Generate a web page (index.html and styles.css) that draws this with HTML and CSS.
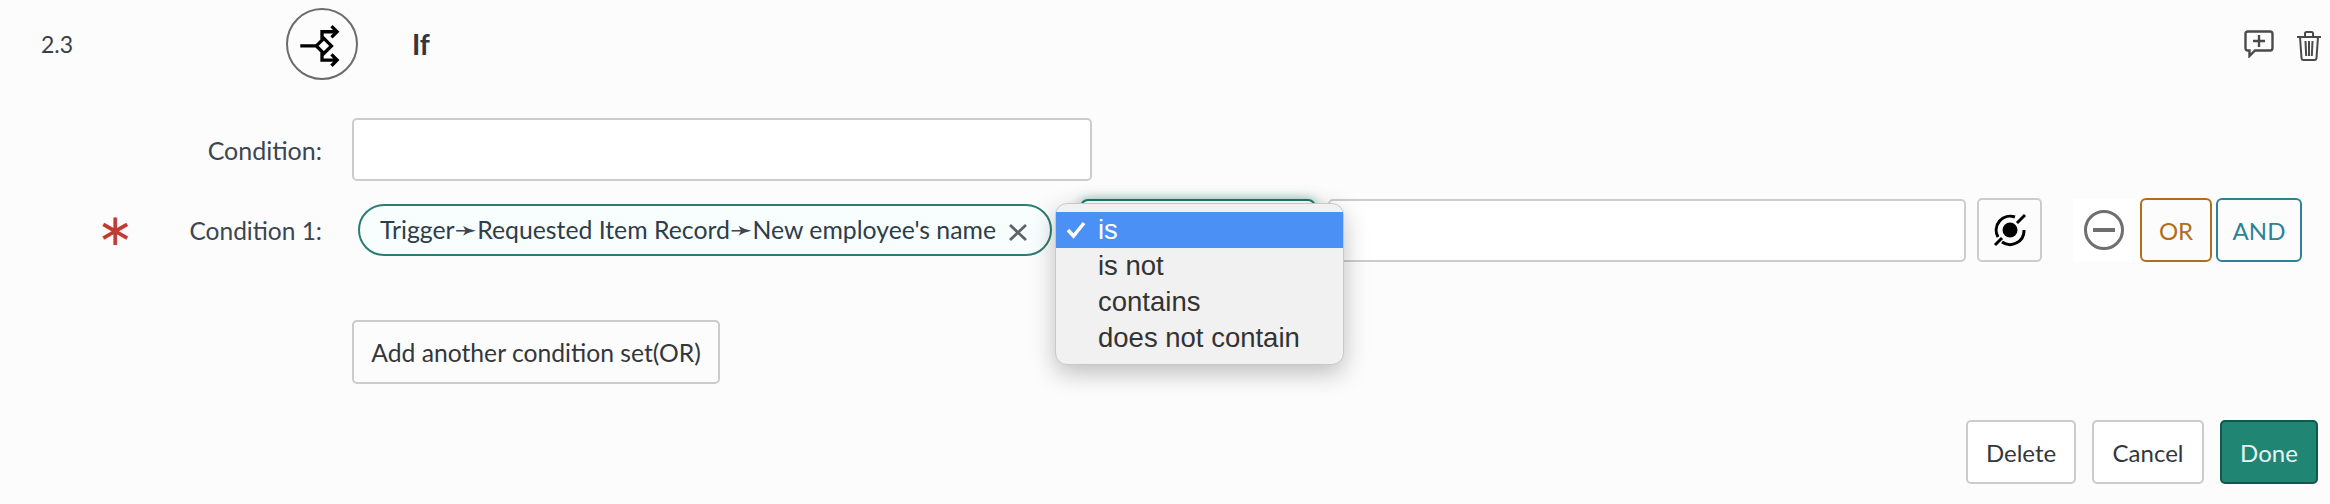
FILE: index.html
```html
<!DOCTYPE html>
<html lang="en">
<head>
    <meta charset="UTF-8">
    <title>If step</title>
    <link rel="stylesheet" href="styles.css">
</head>
<body>
    <div class="step">
        <div class="step-head">
            <span class="step-num">2.3</span>
            <span class="step-icon">
                <svg width="72" height="72" viewBox="0 0 72 72" fill="none" stroke="#000" stroke-width="3.500">
                    <path d="M13 38H30M38 30L46 38L38 46L30 38ZM36 31V23H51M46 17L52 23L46 29M36 45V53H51M46 47L52 53L46 59"/>
                </svg>
            </span>
            <span class="step-title">If</span>
            <div class="step-tools">
                <svg width="30" height="28" viewBox="0 0 30 28" fill="none" stroke="#4a4a4a" stroke-width="2.400">
                    <path d="M4 1.500H26Q28.500 1.500 28.500 4V18Q28.500 20.500 26 20.500H11L5.500 26V20.500H4Q1.500 20.500 1.500 18V4Q1.500 1.500 4 1.500ZM15 5V17M9 11H21"/>
                </svg>
                <svg class="trash" width="26" height="30" viewBox="0 0 26 30" fill="none" stroke="#4a4a4a" stroke-width="2">
                    <path d="M1 6H25M9 5V2.500Q9 1 10.500 1H15.500Q17 1 17 2.500V5M4 6L5.500 27Q5.700 29 7.500 29H18.500Q20.300 29 20.500 27L22 6M9.500 10L10.200 25M13 10V25M16.500 10L15.800 25"/>
                </svg>
            </div>
        </div>

        <div class="row row-first">
            <label class="row-label">Condition:</label>
            <div class="text-box condition-box"></div>
        </div>

        <div class="row row-second">
            <label class="row-label"><span class="required">∗</span><span class="label-text">Condition 1:</span></label>
            <div class="pill">
                <span class="pill-text">Trigger<i class="arrow">➛</i>Requested Item Record<i class="arrow">➛</i>New employee's name</span>
                <svg class="pill-x" width="20" height="20" viewBox="0 0 20 20" stroke="#5f6468" stroke-width="2.800">
                    <path d="M2 3L18 18M18 3L2 18"/>
                </svg>
            </div>
            <div class="op-field"></div>
            <div class="text-box value-box"></div>
            <button class="btn icon-btn">
                <svg width="34" height="34" viewBox="0 0 34 34" fill="none" stroke="#000" stroke-width="3">
                    <circle cx="17" cy="17" r="7.500" fill="#000" stroke="none"/>
                    <path d="M22 4A14 14 0 0 0 5 24M31 17A14 14 0 0 1 9 29M2 32L9 25M24 10L32 2"/>
                </svg>
            </button>
            <span class="minus-wrap">
                <svg width="42" height="42" viewBox="0 0 42 42" fill="none" stroke="#6f6f6f">
                    <circle cx="21" cy="21" r="18.500" stroke-width="3"/>
                    <path d="M10 21H32" stroke-width="4"/>
                </svg>
            </span>
            <button class="btn logic-btn or-btn">OR</button>
            <button class="btn logic-btn and-btn">AND</button>

            <ul class="op-menu">
                <li class="selected">
                    <svg class="check" width="20" height="18" viewBox="0 0 20 18" fill="none" stroke="#fff" stroke-width="3.500">
                        <path d="M2 9L7.500 15L18 2"/>
                    </svg>is</li>
                <li>is not</li>
                <li>contains</li>
                <li>does not contain</li>
            </ul>
        </div>

        <div class="row-add">
            <button class="btn add-btn">Add another condition set(OR)</button>
        </div>

        <div class="step-foot">
            <button class="btn delete-btn">Delete</button>
            <button class="btn cancel-btn">Cancel</button>
            <button class="btn done-btn">Done</button>
        </div>
    </div>
</body>
</html>
```

FILE: styles.css
```css
* {
    margin: 0;
    padding: 0;
    box-sizing: border-box;
}

body {
    font-family: 'Lato', 'Noto Sans', sans-serif;
    font-size: 25px;
    background: #fcfcfc;
    color: #2e3d49;
    height: 504px;
    overflow: hidden;
}

.step {
    padding-top: 8px;
}

/* Header */
.step-head {
    display: flex;
    align-items: center;
    height: 72px;
    padding-left: 41px;
    padding-right: 8px;
}

.step-num {
    width: 245px;
    font-size: 23px;
    color: #3b3f44;
}

.step-icon {
    width: 72px;
    height: 72px;
    border: 2px solid #6b6b6b;
    border-radius: 50%;
    display: flex;
    align-items: center;
    justify-content: center;
}

.step-title {
    margin-left: 54px;
    font-size: 28px;
    font-weight: 700;
    color: #33373b;
}

.step-tools {
    margin-left: auto;
    display: flex;
    align-items: center;
    gap: 22px;
}

.trash {
    margin-top: 3px;
}

/* Condition rows */
.row {
    display: flex;
    align-items: center;
}

.row-first {
    margin-top: 38px;
}

.row-second {
    margin-top: 17px;
    position: relative;
}

.row-label {
    width: 322px;
    padding-left: 97px;
    display: flex;
    justify-content: space-between;
    align-items: center;
    color: #3b4650;
}

.row-first .row-label {
    justify-content: flex-end;
}

.label-text {
    font-size: 24.5px;
}

.required {
    font-family: 'DejaVu Sans', sans-serif;
    font-size: 44px;
    line-height: 40px;
    color: #c23a30;
}

.text-box {
    height: 63px;
    background: #fff;
    border: 2px solid #cccccc;
    border-radius: 5px;
}

.condition-box {
    width: 740px;
    margin-left: 30px;
}

.pill {
    width: 694px;
    height: 52px;
    margin-left: 36px;
    padding-left: 20px;
    padding-right: 22px;
    display: flex;
    align-items: center;
    justify-content: space-between;
    background: #f8fdfd;
    border: 2px solid #2a7d70;
    border-radius: 26px;
    white-space: nowrap;
}

.pill-text {
    font-size: 24.8px;
    margin-top: -2px;
}

.pill-x {
    margin-top: 4px;
}

.arrow {
    font-family: 'DejaVu Sans', sans-serif;
    font-style: normal;
    font-size: 27px;
    line-height: 24px;
    color: #3b4650;
}

.op-field {
    width: 236px;
    height: 63px;
    margin-left: 28px;
    background: #fff;
    border: 2px solid #1b7a68;
    border-radius: 8px;
    box-shadow: 0 0 12px rgba(27, 122, 104, 0.5);
}

.value-box {
    width: 638px;
    margin-left: 12px;
}

/* Buttons */
.btn {
    font-family: inherit;
    font-size: 24px;
    height: 64px;
    background: #fff;
    border: 2px solid #cccccc;
    border-radius: 5px;
    color: #33373b;
}

.icon-btn {
    width: 65px;
    margin-left: 11px;
    background: #fcfcfc;
    display: flex;
    align-items: center;
    justify-content: center;
}

.minus-wrap {
    width: 62px;
    height: 62px;
    margin-left: 31px;
    background: #fff;
    display: flex;
    align-items: center;
    justify-content: center;
}

.logic-btn {
    background: #fcfcfc;
    border-radius: 6px;
}

.or-btn {
    width: 72px;
    margin-left: 5px;
    border-color: #b06d1c;
    color: #b06d1c;
}

.and-btn {
    width: 86px;
    margin-left: 4px;
    border-color: #2e8296;
    color: #2e8296;
}

.row-add {
    margin-top: 58px;
    padding-left: 352px;
}

.add-btn {
    width: 368px;
    font-size: 24.7px;
    background: #fcfcfc;
}

.step-foot {
    margin-top: 36px;
    padding-right: 12px;
    display: flex;
    justify-content: flex-end;
    gap: 16px;
}

.delete-btn {
    width: 110px;
}

.cancel-btn {
    width: 112px;
}

.done-btn {
    width: 98px;
    background: #208573;
    border-color: #12574c;
    color: #e6f4f1;
}

/* Native select menu */
.op-menu {
    position: absolute;
    left: 1055px;
    top: 5px;
    width: 289px;
    height: 162px;
    padding-top: 8px;
    list-style: none;
    font-family: 'Liberation Sans', Arial, sans-serif;
    font-size: 27.5px;
    background: #f0f1f0;
    border: 1px solid #c8c8c8;
    border-radius: 12px;
    box-shadow: 0 8px 24px rgba(0, 0, 0, 0.25);
    color: #333;
}

.op-menu li {
    height: 36px;
    line-height: 36px;
    padding-left: 42px;
    position: relative;
}

.op-menu .selected {
    background: #4a90f5;
    color: #fff;
}

.check {
    position: absolute;
    left: 10px;
    top: 9px;
}
```
